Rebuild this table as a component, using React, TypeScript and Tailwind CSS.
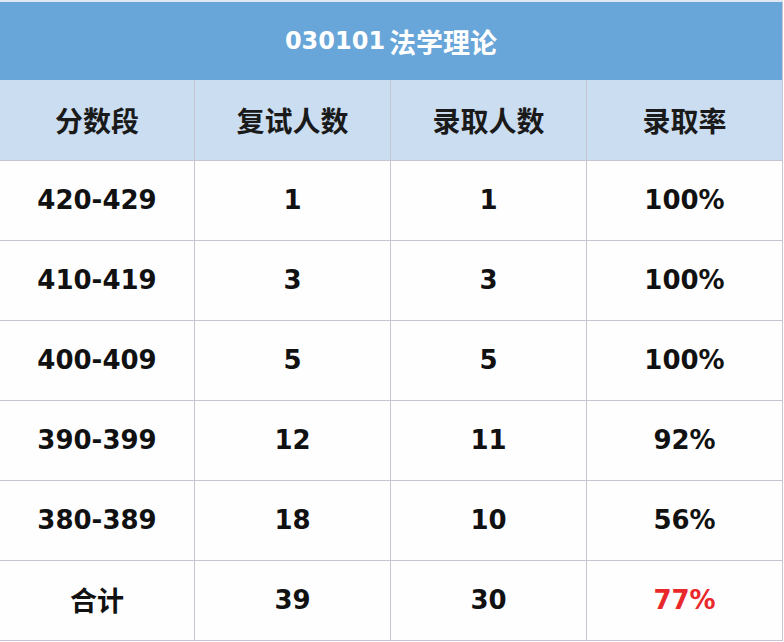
import React from "react";

const rows = [
  ["420-429", "1", "1", "100%"],
  ["410-419", "3", "3", "100%"],
  ["400-409", "5", "5", "100%"],
  ["390-399", "12", "11", "92%"],
  ["380-389", "18", "10", "56%"],
];

const font = { fontFamily: '"DejaVu Sans", "Noto Sans CJK SC", sans-serif' };
const cjk = { fontFamily: '"Noto Sans CJK SC", sans-serif' };

function Cell({ children, first, className = "" }: { children: React.ReactNode; first?: boolean; className?: string }) {
  return (
    <div
      className={`${first ? "w-[195px]" : "w-[196px]"} h-full flex items-center justify-center border-r border-[#c6c6d2] ${className}`}
    >
      {children}
    </div>
  );
}

export default function App() {
  return (
    <div className="w-[784px] h-[642px] bg-white" style={font}>
      <div className="w-[783px]">
        <div className="h-[80px] bg-[#68a5d8] border-t-2 border-[#dfe8f2] border-r border-r-[#c6c6d2] flex items-center justify-center">
          <span className="text-white font-bold text-[24px] leading-none">030101</span>
          <span className="text-white font-bold text-[27px] leading-none ml-[4px]" style={cjk}>法学理论</span>
        </div>
        <div className="h-[80px] bg-[#cbddf1] flex text-[28px] text-[#1a1a1a] font-bold" style={cjk}>
          <Cell first>分数段</Cell>
          <Cell>复试人数</Cell>
          <Cell>录取人数</Cell>
          <Cell>录取率</Cell>
        </div>
        {rows.map((r) => (
          <div key={r[0]} className="h-[80px] border-t border-[#c6c6d2] flex text-[26px] font-bold text-[#111] bg-[#fefefe]">
            <Cell first>{r[0]}</Cell>
            <Cell>{r[1]}</Cell>
            <Cell>{r[2]}</Cell>
            <Cell>{r[3]}</Cell>
          </div>
        ))}
        <div className="h-[81px] border-t border-b border-[#c6c6d2] flex text-[26px] font-bold text-[#111] bg-[#fefefe]">
          <Cell first><span className="text-[27px]" style={cjk}>合计</span></Cell>
          <Cell>39</Cell>
          <Cell>30</Cell>
          <Cell className="text-[#e8282b]">77%</Cell>
        </div>
      </div>
    </div>
  );
}
